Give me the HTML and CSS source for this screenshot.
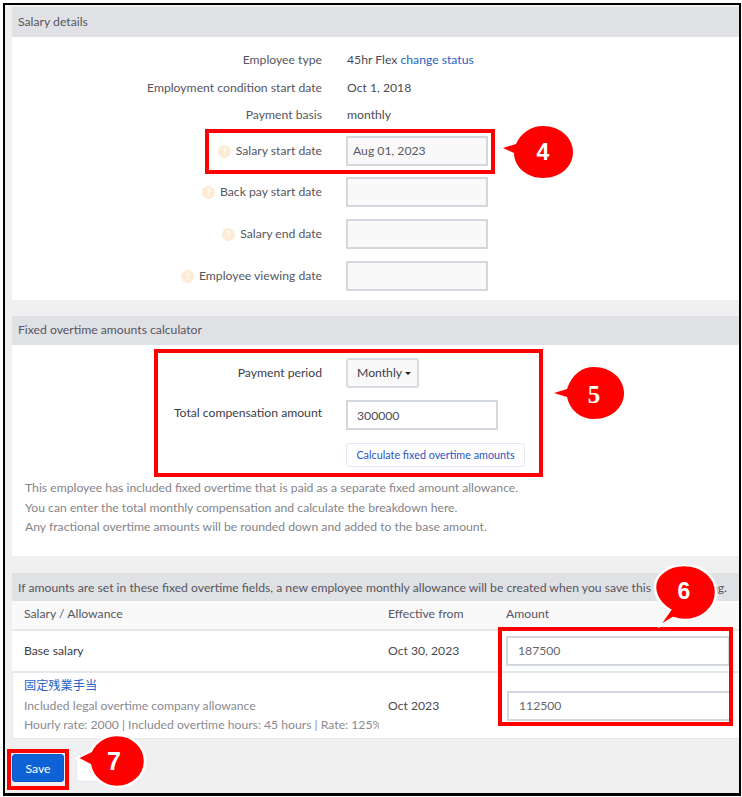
FILE: index.html
```html
<!DOCTYPE html>
<html lang="en">
<head>
<meta charset="utf-8">
<title>Salary details</title>
<link rel="stylesheet" href="styles.css">
</head>
<body>
<div class="frame">
  <section class="panel panel-salary">
    <h2 class="panel-head">Salary details</h2>
    <div class="form form-salary">
      <div class="row"><div class="label">Employee type</div><div class="value">45hr Flex <a class="link">change status</a></div></div>
      <div class="row"><div class="label">Employment condition start date</div><div class="value">Oct 1, 2018</div></div>
      <div class="row"><div class="label">Payment basis</div><div class="value">monthly</div></div>
      <div class="row row-input row-first"><div class="label"><span class="help">?</span>Salary start date</div><div class="field">Aug 01, 2023</div></div>
      <div class="row row-input"><div class="label"><span class="help">?</span>Back pay start date</div><div class="field"></div></div>
      <div class="row row-input"><div class="label"><span class="help">?</span>Salary end date</div><div class="field"></div></div>
      <div class="row row-input"><div class="label"><span class="help">?</span>Employee viewing date</div><div class="field"></div></div>
    </div>
  </section>

  <section class="panel panel-calc">
    <h2 class="panel-head">Fixed overtime amounts calculator</h2>
    <div class="form form-calc">
      <div class="row row-select"><div class="label label-dark">Payment period</div><div class="dropdown">Monthly<span class="caret"></span></div></div>
      <div class="row row-total"><div class="label label-dark label-up">Total compensation amount</div><div class="field field-total">300000</div></div>
      <div class="row row-calc"><div class="label"></div><div class="calc-btn">Calculate fixed overtime amounts</div></div>
    </div>
    <div class="notes">
      <p>This employee has included fixed overtime that is paid as a separate fixed amount allowance.</p>
      <p>You can enter the total monthly compensation and calculate the breakdown here.</p>
      <p>Any fractional overtime amounts will be rounded down and added to the base amount.</p>
    </div>
  </section>

  <section class="panel panel-table">
    <h2 class="panel-head panel-head-long">If amounts are set in these fixed overtime fields, a new employee monthly allowance will be created when you save this salary setting.</h2>
    <div class="tr tr-head">
      <div class="td td-name">Salary / Allowance</div>
      <div class="td td-date">Effective from</div>
      <div class="td td-amount">Amount</div>
    </div>
    <div class="tr tr-base">
      <div class="td td-name td-strong">Base salary</div>
      <div class="td td-date">Oct 30, 2023</div>
      <div class="td td-amount"><div class="field field-amount">187500</div></div>
    </div>
    <div class="tr tr-allow">
      <div class="td td-name td-stack">
        <a class="link link-cjk">固定残業手当</a>
        <div class="sub">Included legal overtime company allowance</div>
        <div class="sub">Hourly rate: 2000 | Included overtime hours: 45 hours | Rate: 125%</div>
      </div>
      <div class="td td-date">Oct 2023</div>
      <div class="td td-amount"><div class="field field-amount">112500</div></div>
    </div>
  </section>

  <div class="actions">
    <button class="btn btn-save" type="button">Save</button>
    <button class="btn btn-cancel" type="button">Cancel</button>
  </div>

  <div class="mark mark-4"></div>
  <div class="mark mark-5"></div>
  <div class="mark mark-6"></div>
  <div class="mark mark-7"></div>

  <div class="bubble bubble-4">
    <svg width="80" height="60" viewBox="0 0 80 60"><path class="bubble-shape" d="M2 22 L15 18 C20 7 30 0 42 0 C59 0 72 12 72 26 C72 41 59 52 42 52 C26 52 13 41 13 27 Z"/></svg>
    <span class="num">4</span>
  </div>
  <div class="bubble bubble-5">
    <svg width="80" height="60" viewBox="0 0 80 60"><path class="bubble-shape" d="M2 26 L15 22 C20 7 30 0 42 0 C59 0 72 12 72 26 C72 41 59 52 42 52 C29 52 18 44 15 30 Z"/></svg>
    <span class="num">5</span>
  </div>
  <div class="bubble bubble-6">
    <svg width="70" height="66" viewBox="0 0 70 66"><path class="bubble-halo" d="M6 62 L18 45 C9 40 3 31 3 22 C3 10 16 0 32 0 C49 0 64 11 64 27 C64 44 49 55 32 55 C28 55 24 54 21 53 Z"/></svg>
    <span class="num">6</span>
  </div>
  <div class="bubble bubble-7">
    <svg width="80" height="60" viewBox="0 0 80 60"><path class="bubble-halo" d="M3 25 L17 18 C22 8 32 2 43 2 C59 2 71 14 71 28 C71 42 59 54 43 54 C29 54 18 44 16 32 Z"/></svg>
    <span class="num">7</span>
  </div>
</div>
</body>
</html>
```

FILE: styles.css
```css
* { box-sizing: border-box; }

html, body { margin: 0; padding: 0; background: #fff; }

body {
  width: 742px;
  height: 797px;
  overflow: hidden;
  font-family: Lato, "Noto Sans CJK JP", sans-serif;
  font-size: 12.2px;
  line-height: 20px;
  color: #4b4b55;
}

.frame {
  position: relative;
  margin: 3px 0 0 3px;
  width: 738px;
  height: 793px;
  padding: 2px 0 0 7px;
  border: 2px solid #000;
  border-bottom-width: 3px;
  background: #f0f0f0;
  overflow: hidden;
}

.panel { background: #fff; }

.panel-head {
  margin: 0;
  height: 30px;
  padding: 0 6px;
  background: #e0e1e4;
  font-size: 12.2px;
  font-weight: 400;
  line-height: 30px;
  color: #56565f;
  white-space: nowrap;
}

.panel-calc .panel-head { height: 29px; line-height: 27px; }
.panel-table .panel-head { height: 28px; line-height: 30px; }

.panel-salary { height: 293px; margin-bottom: 16px; }
.panel-calc { height: 240px; margin-bottom: 17px; }

.form-salary { padding-top: 13px; }
.form-calc { padding-top: 13px; }

.row {
  display: grid;
  grid-template-columns: 310px 1fr;
  column-gap: 24px;
  align-items: center;
  min-height: 20px;
  margin-bottom: 7.5px;
}

.row-input { margin-top: 0; margin-bottom: 12px; }
.row-first { margin-top: 11px; margin-bottom: 11px; }

.label {
  display: flex;
  justify-content: flex-end;
  align-items: center;
  text-align: right;
  color: #56565f;
}

.label-dark { color: #3c3c44; }
.label-up { margin-top: -5px; }

.value { color: #4b4b55; margin-left: 1px; }

.link { color: #2a62c4; }

.help {
  flex: none;
  width: 13px;
  height: 13px;
  margin-right: 5px;
  border-radius: 50%;
  background: #fdebd6;
  color: #fff;
  font-size: 10px;
  font-weight: 700;
  line-height: 13px;
  text-align: center;
}

.field {
  width: 142px;
  height: 30px;
  padding: 0 5px;
  border: 2px solid #d2d8de;
  background: #f9f9f9;
  line-height: 25px;
  color: #5a5a63;
}

.row-select { margin-bottom: 12px; }
.row-total { margin-bottom: 13px; }
.row-calc { margin-bottom: 0; }

.dropdown {
  display: flex;
  align-items: center;
  width: 73px;
  height: 30px;
  padding-left: 9px;
  border: 2px solid #d8dce2;
  border-radius: 3px;
  background: #f9f9f9;
  color: #3c3c44;
}

.caret {
  width: 0;
  height: 0;
  margin-left: 3px;
  border-left: 3px solid transparent;
  border-right: 3px solid transparent;
  border-top: 3px solid #222;
}

.field-total {
  width: 152px;
  padding-left: 9px;
  background: #fff;
  color: #4b4b55;
  line-height: 27px;
}

.calc-btn {
  width: 179px;
  height: 24px;
  border: 1px solid #e3e9f7;
  border-radius: 3px;
  background: #fff;
  font-size: 10.8px;
  line-height: 22px;
  text-align: center;
  color: #2a55c0;
}

.notes { margin-top: 11px; padding-left: 13px; color: #84848a; }

.notes p { margin: 0; height: 19.5px; line-height: 19.5px; }

.panel-table { height: 165px; }

.tr {
  display: grid;
  grid-template-columns: 366px 10px 118px 1fr;
  align-items: center;
  background: #fff;
  border-bottom: 2px solid #e6e7e9;
}

.td-name { grid-column: 1; }
.td-date { grid-column: 3; }
.td-amount { grid-column: 4; }

.tr-head { height: 30px; background: #f9f9f9; padding-bottom: 2px; }
.tr-base { height: 42px; }
.tr-allow { height: 66px; border-bottom-width: 1px; border-left: 1px solid #e6e7e9; }

.td { min-width: 0; }
.td-name { padding-left: 12px; color: #3c3c44; overflow: hidden; white-space: nowrap; }
.tr-head .td { color: #56565f; }
.tr-allow .td-name { padding-left: 11px; }
.tr-allow .td-date { margin-left: -1px; }

.td-stack { line-height: 19.5px; align-self: start; padding-top: 3px; }

.link-cjk { display: block; font-size: 12.2px; color: #2a62c4; }

.sub { color: #8a8a90; }

.field-amount {
  width: 224px;
  padding-left: 10px;
  background: #fff;
  color: #66666e;
  line-height: 26px;
}

.actions { display: flex; gap: 12px; margin-top: 16px; }

.btn {
  width: 52px;
  height: 28px;
  padding: 0;
  border-radius: 3px;
  font-family: inherit;
  font-size: 12.2px;
}

.btn-save { border: 1px solid #0a58c8; background: #0f62d6; color: #fff; }
.btn-cancel { width: 63px; border: 1px solid #e3e9f7; background: #fff; color: #2a55c0; }

/* Annotations: frame content box origin is page (5,5) */
.mark { position: absolute; border: 4px solid #f00; }
.mark-4 { left: 200px; top: 124px; width: 290px; height: 45px; }
.mark-5 { left: 149px; top: 344px; width: 389px; height: 128px; }
.mark-6 { left: 493px; top: 622px; width: 235px; height: 99px; }
.mark-7 { left: 2px; top: 744px; width: 62px; height: 41px; }

.bubble { position: absolute; }
.bubble svg { display: block; }
.bubble-shape { fill: #f00; }
.bubble-halo { fill: #f00; stroke: #fff; stroke-width: 2.5px; }

.num {
  position: absolute;
  top: 0;
  left: 0;
  width: 100%;
  font-family: "Liberation Sans", sans-serif;
  font-size: 23px;
  font-weight: 700;
  line-height: 1;
  text-align: center;
  color: #fff;
}

.bubble-4 { left: 496px; top: 121px; width: 80px; height: 60px; }
.bubble-4 .num { top: 15px; left: 2px; }
.bubble-5 { left: 547px; top: 362px; width: 80px; height: 60px; }
.bubble-5 .num { top: 15px; left: 2px; font-family: "Liberation Serif", serif; font-size: 25px; }
.bubble-6 { left: 647px; top: 560px; width: 70px; height: 66px; }
.bubble-6 .num { top: 15px; left: -3px; }
.bubble-7 { left: 69px; top: 728px; width: 80px; height: 60px; }
.bubble-7 .num { top: 16px; left: 0; font-size: 25px; }
```
